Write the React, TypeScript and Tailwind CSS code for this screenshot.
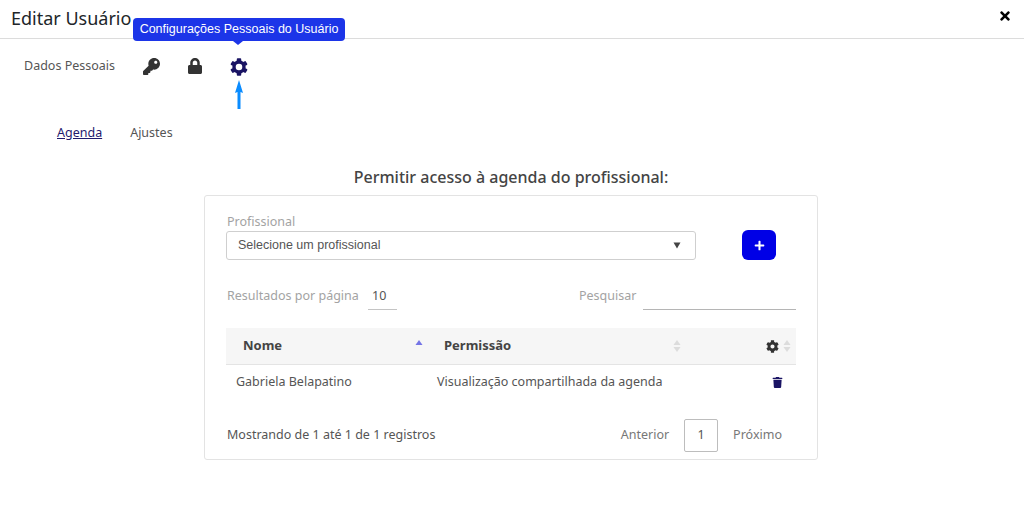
import React from 'react';
import { FaCog, FaKey, FaLock, FaPlus, FaTimes, FaTrash } from 'react-icons/fa';

const SortArrows: React.FC<{ up?: boolean }> = ({ up }) => (
  <svg width="8" height="14" viewBox="0 0 8 14" className="shrink-0">
    <path d="M4 1 L7.5 6 L0.5 6 Z" fill={up ? '#7474e6' : '#dcdcdc'} />
    {!up && <path d="M4 13 L7.5 8 L0.5 8 Z" fill="#dcdcdc" />}
  </svg>
);

const GearIcon: React.FC = () => (
  <svg width="18" height="18" viewBox="0 0 18 18" fill="#1a1464" className="mt-[1px]">
    <circle cx="9" cy="9" r="5" fill="none" stroke="#1a1464" strokeWidth="3.4" />
    {[0, 60, 120, 180, 240, 300].map((angle) => (
      <rect key={angle} x="6.8" y="0.3" width="4.4" height="3.4" rx="0.8" transform={`rotate(${angle} 9 9)`} />
    ))}
  </svg>
);

const App: React.FC = () => {
  return (
    <div className="w-[1024px] h-[522px] overflow-hidden bg-white text-[#555] font-['Noto_Sans',sans-serif]">
      <div className="h-[39px] border-b border-[#dcdcdc] flex items-center justify-between pl-[11px] pr-[12px]">
        <h1 className="text-[18px] leading-[36px] mb-[3px] text-[#212529]">Editar Usuário</h1>
        <FaTimes className="text-black text-[14px] mb-[6px]" />
      </div>

      <div className="flex items-center h-[54px] pl-[24px] text-[12.5px]">
        <span className="w-[118px]">Dados Pessoais</span>
        <div className="w-[19px] flex justify-center">
          <FaKey className="text-[#333] text-[17px]" />
        </div>
        <div className="w-[19px] flex justify-center ml-[24px]">
          <FaLock className="text-[#333] text-[16px]" />
        </div>
        <div className="relative w-[19px] h-[19px] flex justify-center ml-[25px]">
          <GearIcon />
          <div className="absolute left-[-96px] top-[-39px] h-[23px] w-[212px] rounded-[4px] bg-[#1c35e8] text-white flex items-center justify-center text-[12.5px] whitespace-nowrap font-['Liberation_Sans',sans-serif]">
            Configurações Pessoais do Usuário
            <span className="absolute left-[100px] top-[23px] border-x-[5px] border-x-transparent border-t-[4px] border-t-[#1c35e8]" />
          </div>
          <svg width="10" height="30" viewBox="0 0 10 30" className="absolute left-[5px] top-[23px]">
            <path d="M5 0 L9 13 L6.5 12 L6.5 29 L3.5 29 L3.5 12 L1 13 Z" fill="#0a8cff" />
          </svg>
        </div>
      </div>

      <div className="flex items-center gap-[28px] pl-[57px] mt-[31px] text-[12.5px] leading-[18px]">
        <span className="underline text-[#1f1a6e]">Agenda</span>
        <span>Ajustes</span>
      </div>

      <h2 className="mt-[23px] text-center text-[16px] leading-[24px] font-medium text-[#444] w-[1022px]">
        Permitir acesso à agenda do profissional:
      </h2>

      <div className="ml-[204px] mt-[6px] w-[614px] h-[265px] border border-[#e3e3e3] rounded-[3px] px-[21px] pt-[17px]">
        <div className="flex items-end">
          <div className="w-[470px]">
            <div className="h-[18px] pl-px text-[12.5px] leading-[18px] text-[#a3a3a3]">Profissional</div>
            <div className="h-[29px] border border-[#cfcfcf] rounded-[3px] flex items-center justify-between pl-[11px] pr-[14px] text-[12.5px] text-[#555] font-['Liberation_Sans',sans-serif]">
              <span>Selecione um profissional</span>
              <svg width="8" height="7" viewBox="0 0 8 7">
                <path d="M0.5 0.5 L7.5 0.5 L4 6.5 Z" fill="#444" />
              </svg>
            </div>
          </div>
          <button className="ml-[46px] w-[34px] h-[30px] rounded-[6px] bg-[#0000e6] flex items-center justify-center">
            <FaPlus className="text-white text-[11px]" />
          </button>
        </div>

        <div className="flex items-center mt-[22px] h-[28px] text-[12.5px]">
          <span className="text-[#a3a3a3] ml-px w-[141px]">Resultados por página</span>
          <span className="w-[29px] h-[28px] border-b border-[#c4c4c4] text-[#555] leading-[27px] pl-[4px]">10</span>
          <span className="ml-[182px] w-[64px] text-[#a3a3a3]">Pesquisar</span>
          <span className="w-[153px] h-[28px] border-b border-[#b5b5b5]" />
        </div>

        <div className="mt-[18px] h-[37px] bg-[#f6f6f6] border-b border-[#e4e4e4] flex items-center text-[13px] font-bold text-[#444]">
          <div className="w-[201px] pl-[17px] pr-[4px] flex items-center justify-between">
            <span>Nome</span>
            <span className="mb-[1px]"><SortArrows up /></span>
          </div>
          <div className="w-[254px] pl-[17px] flex items-center justify-between">
            <span>Permissão</span>
            <SortArrows />
          </div>
          <div className="flex-1 flex items-center justify-end gap-[4px] pr-[5px]">
            <FaCog className="text-[#333] text-[13px]" />
            <SortArrows />
          </div>
        </div>

        <div className="h-[35px] flex items-center text-[12.5px] text-[#555]">
          <span className="w-[201px] pl-[10px]">Gabriela Belapatino</span>
          <span className="pl-[10px]">Visualização compartilhada da agenda</span>
          <FaTrash className="ml-auto mr-[13px] mb-[1px] text-[#1a1464] text-[11px]" />
        </div>

        <div className="mt-[19px] h-[33px] flex items-center justify-between text-[12.5px]">
          <span className="pl-px">Mostrando de 1 até 1 de 1 registros</span>
          <div className="flex items-center pr-[14px]">
            <span className="text-[#777]">Anterior</span>
            <span className="ml-[15px] w-[34px] h-[33px] border border-[#bdbdbd] rounded-[2px] flex items-center justify-center">1</span>
            <span className="ml-[15px] text-[#777]">Próximo</span>
          </div>
        </div>
      </div>
    </div>
  );
};

export default App;
